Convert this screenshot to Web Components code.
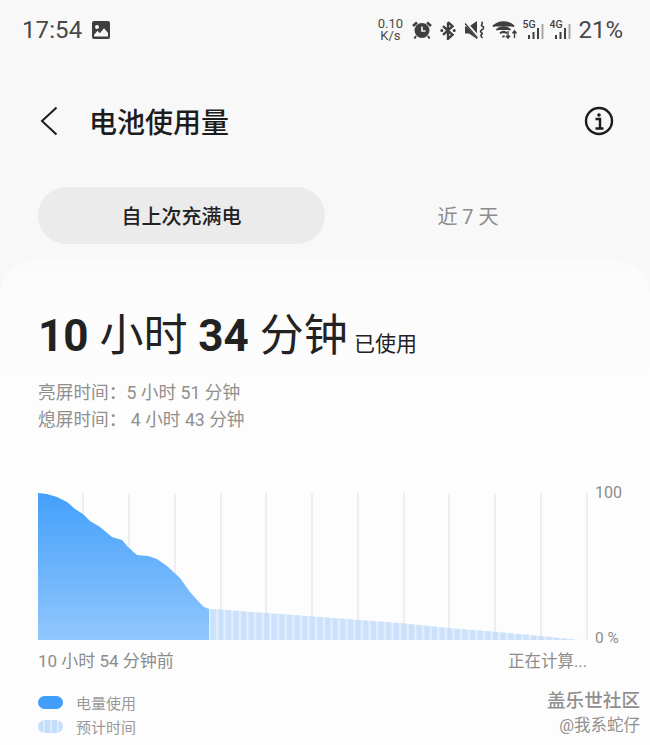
<!DOCTYPE html>
<html lang="zh">
<head>
<meta charset="utf-8">
<title>电池使用量</title>
<style>
  html, body { margin: 0; padding: 0; }
  body {
    width: 650px; height: 745px; overflow: hidden; position: relative;
    background: #f8f8f8; color: #222;
    font-family: Roboto, "Noto Sans CJK SC", sans-serif;
  }
</style>
</head>
<body>
<status-bar></status-bar>
<app-header>电池使用量</app-header>
<tab-switch active="自上次充满电" other="近 7 天"></tab-switch>
<usage-card>
  <usage-total slot="total"></usage-total>
  <usage-chart slot="chart"></usage-chart>
  <legend-item slot="legend" kind="solid">电量使用</legend-item>
  <legend-item slot="legend" kind="striped">预计时间</legend-item>
</usage-card>
<water-mark></water-mark>

<script>
// every element has its own shadow root, set in the class
class Base extends HTMLElement {
  render(html) {
    this.attachShadow({mode: 'open'}).innerHTML = html;
  }
}

customElements.define('status-bar', class extends Base {
  connectedCallback() {
    this.render(`
    <style>
      :host { display: flex; align-items: center; height: 60px; padding: 0 27px 0 22px; color: #484848; }
      .time { font-size: 24px; letter-spacing: .1px; }
      .pic { margin-left: 9px; }
      .right { margin-left: auto; display: flex; align-items: center; }
      .speed { width: 26px; font-size: 13px; line-height: 12px; text-align: center; }
      .pct { font-size: 24px; margin-left: 7px; }
      svg { display: block; fill: #3f3f3f; }
    </style>
    <span class="time">17:54</span>
    <svg class="pic" width="20" height="20" viewBox="0 0 20 20"><path fill-rule="evenodd" d="M3 1h14a2 2 0 0 1 2 2v14a2 2 0 0 1-2 2H3a2 2 0 0 1-2-2V3a2 2 0 0 1 2-2zM3 16.500h14v-3.600l-4-4.700-4.200 5-2.300-2.400L3 15zM6 5a2 2 0 1 0 0 4 2 2 0 0 0 0-4z"/></svg>
    <div class="right">
      <div class="speed">0.10 K/s</div>
      <svg style="margin-left:9px" width="20" height="18" viewBox="0 0 20 18"><path d="M1 5 5 1.500M19 5 15 1.500" stroke="#3f3f3f" stroke-width="2.600"/><circle cx="10" cy="9.500" r="7.500"/><path d="M10 5.500V10h3.500" fill="none" stroke="#f8f8f8" stroke-width="1.600"/><path d="M4 15 2.500 17.500M16 15l1.500 2.500" stroke="#3f3f3f" stroke-width="2"/></svg>
      <svg style="margin-left:8px" width="16" height="19" viewBox="0 0 16 19"><path d="M8 1.200v16.600l4.500-4L3 5.200M8 1.200l4.500 4L3 13.800" fill="none" stroke="#3f3f3f" stroke-width="2.400"/><circle cx="1.800" cy="9.500" r="1.500"/><circle cx="14.200" cy="9.500" r="1.500"/></svg>
      <svg style="margin-left:9px" width="20" height="18" viewBox="0 0 20 18"><path d="M0 5.500h4L12 0v18L4 12.500H0z"/><path d="M0 1 13 16" stroke="#f8f8f8" stroke-width="3.200"/><path d="M0 2.500 12.500 17" stroke="#3f3f3f" stroke-width="1.400"/><path d="M16.500 1c2.500 1.500-1.500 3 .5 4s2.500 2-.5 4 2 3 .5 4-1.500 2 .5 4" fill="none" stroke="#3f3f3f" stroke-width="1.600"/></svg>
      <svg style="margin-left:7px" width="25" height="20" viewBox="0 0 25 20" fill="none" stroke="#3f3f3f" stroke-width="1.900"><path d="M1 6.500C6.500 .6 16.500 .6 22 6.500M4.500 10c3.800-3.600 10.200-3.600 14 0M8 13.300c2.200-1.900 5-1.900 7 0"/><path d="M11.500 15.500v2" stroke-width="2.400"/><path d="M16 11v7M14 15.800l2 2.400 2-2.400M22.500 18v-7M20.500 13.200l2-2.400 2 2.400" stroke-width="1.400"/></svg>
      <net-icon style="margin-left:5px" label="5G"></net-icon>
      <net-icon style="margin-left:5px" label="4G"></net-icon>
      <span class="pct">21%</span>
    </div>`);
  }
});

customElements.define('net-icon', class extends Base {
  connectedCallback() {
    const bars = [[6,16],[10.500,13],[15,9],[19.500,5]].map(([x, y], i) =>
      `<rect x="${x}" y="${y}" width="2" height="${20 - y}" fill="${i > 2 ? '#a8a8a8' : '#3f3f3f'}"/>`).join('');
    this.render(`
    <style>
      :host { display: block; position: relative; width: 22px; height: 22px; }
      span { position: absolute; left: 0; top: 0; font-size: 10.500px; line-height: 11px; font-weight: 500; color: #3f3f3f; }
      svg { display: block; }
    </style>
    <span>${this.getAttribute('label')}</span>
    <svg width="22" height="22" viewBox="0 0 22 22">${bars}</svg>`);
  }
});

customElements.define('app-header', class extends Base {
  connectedCallback() {
    this.render(`
    <style>
      :host { display: flex; align-items: center; height: 122px; padding: 0 36px 0 40px; box-sizing: border-box; }
      svg { display: block; }
      h1 { margin: 0 0 0 31px; font-size: 28px; font-weight: 500; color: #1c1c1c; }
      .info { margin-left: auto; }
    </style>
    <svg width="18" height="30" viewBox="0 0 18 30"><path d="M16.500 1.500 2 15l14.500 13.500" fill="none" stroke="#1c1c1c" stroke-width="2"/></svg>
    <h1><slot></slot></h1>
    <svg class="info" width="30" height="30" viewBox="0 0 30 30"><circle cx="15" cy="15" r="13" fill="none" stroke="#1c1c1c" stroke-width="2.400"/><circle cx="15" cy="9" r="1.800" fill="#1c1c1c"/><path d="M11.500 13h4.500v9M11.500 22.500h8" fill="none" stroke="#1c1c1c" stroke-width="2.400"/></svg>`);
  }
});

customElements.define('tab-switch', class extends Base {
  connectedCallback() {
    this.render(`
    <style>
      :host { display: grid; grid-template-columns: 287px 1fr; height: 57px; margin: 5px 39px 0 38px; font-size: 20px; }
      div { display: flex; align-items: center; justify-content: center; }
      .on { background: #ebebeb; border-radius: 29px; color: #222; font-weight: 500; }
      .off { color: #8c8c8c; }
    </style>
    <div class="on">${this.getAttribute('active')}</div>
    <div class="off">${this.getAttribute('other')}</div>`);
  }
});

customElements.define('usage-card', class extends Base {
  connectedCallback() {
    this.render(`
    <style>
      :host {
        display: block; margin-top: 16px; height: 485px; box-sizing: border-box; padding: 53px 0 0 38px;
        background: linear-gradient(#fbfbfb, #fdfdfd 25%); border-radius: 36px 36px 0 0;
      }
      .legend { display: flex; flex-direction: column; gap: 6px; margin-top: 21px; }
    </style>
    <slot name="total"></slot>
    <slot name="chart"></slot>
    <div class="legend"><slot name="legend"></slot></div>`);
  }
});

customElements.define('usage-total', class extends Base {
  connectedCallback() {
    this.render(`
    <style>
      :host { display: block; }
      .big { font-size: 44px; line-height: 46px; color: #222; white-space: nowrap; }
      b { font-weight: 700; }
      small { font-size: 21px; margin-left: 1px; }
      .sub { margin-top: 13px; font-size: 17.700px; line-height: 27px; color: #8f8f8f; white-space: pre; }
    </style>
    <div class="big"><b>10</b> 小时 <b>34</b> 分钟<small> 已使用</small></div>
    <div class="sub">亮屏时间：5 小时 51 分钟
熄屏时间： 4 小时 43 分钟</div>`);
  }
});

customElements.define('usage-chart', class extends Base {
  connectedCallback() {
    const grid = [83, 129, 175, 221, 266, 312, 358, 404, 449, 495, 541, 587].map(x =>
      `<line x1="${x - 38}" x2="${x - 38}" y1="0" y2="147" stroke="#e8e8e8" stroke-width="1.500"/>`).join('');
    const pts = [[38,493],[47,494],[57,497],[67,502],[75,509],[83,514],[90,521],[100,527],[112,537],[122,540],[128,547],[137,555],[148,556],[157,559],[167,566],[180,578],[190,592],[198,601],[204,607],[209,609]];
    const area = 'M0 147L' + pts.map(([x, y]) => `${x - 38} ${y - 493}`).join('L') + 'L171 147Z';
    this.render(`
    <style>
      :host { display: block; position: relative; margin-top: 59px; width: 612px; }
      svg { display: block; }
      .y { position: absolute; left: 557px; font-size: 16px; color: #8c8c8c; }
      .x { display: flex; justify-content: space-between; align-items: baseline; width: 549px; margin-top: 7px; font-size: 17px; color: #8c8c8c; }
      .x span + span { font-size: 16.500px; }
    </style>
    <svg width="550" height="147" viewBox="0 0 550 147">
      <defs>
        <linearGradient id="fill" x1="0" y1="0" x2="0" y2="1"><stop offset="0" stop-color="#44a0fb"/><stop offset="1" stop-color="#91c6fd"/></linearGradient>
        <pattern id="stripe" x="171" width="7.630" height="147" patternUnits="userSpaceOnUse"><rect width="7.630" height="147" fill="#e0edfd"/><rect width="5.400" x="1.500" height="147" fill="#c5ddfa"/></pattern>
      </defs>
      ${grid}
      <path d="M171 116 183 116.500 362 130 411 135 457 138.700 503 143 542 147H171Z" fill="url(#stripe)" opacity=".9"/>
      <path d="${area}" fill="url(#fill)"/>
    </svg>
    <span class="y" style="top:-10px">100</span>
    <span class="y" style="top:136px;font-size:15.500px">0 %</span>
    <div class="x"><span>10 小时 54 分钟前</span><span>正在计算...</span></div>`);
  }
});

customElements.define('legend-item', class extends Base {
  connectedCallback() {
    const solid = this.getAttribute('kind') === 'solid';
    this.render(`
    <style>
      :host { display: flex; align-items: center; height: 18px; font-size: 15px; color: #999; }
      i { display: block; width: 25px; height: 13px; border-radius: 7px; margin-right: 13px;
          background: ${solid ? '#419efb' : 'repeating-linear-gradient(90deg,#c4ddfa 0 5px,#dceafc 5px 7px)'}; }
    </style>
    <i></i><slot></slot>`);
  }
});

customElements.define('water-mark', class extends Base {
  connectedCallback() {
    this.render(`
    <style>
      :host { position: absolute; right: 10px; top: 689px; text-align: right; color: #8f8f8f; }
      div { font-size: 18.600px; line-height: 24px; font-weight: 500; }
      small { display: block; font-size: 16.500px; line-height: 20px; margin-top: 3px; }
    </style>
    <div>盖乐世社区</div><small>@我系蛇仔</small>`);
  }
});
</script>
</body>
</html>
